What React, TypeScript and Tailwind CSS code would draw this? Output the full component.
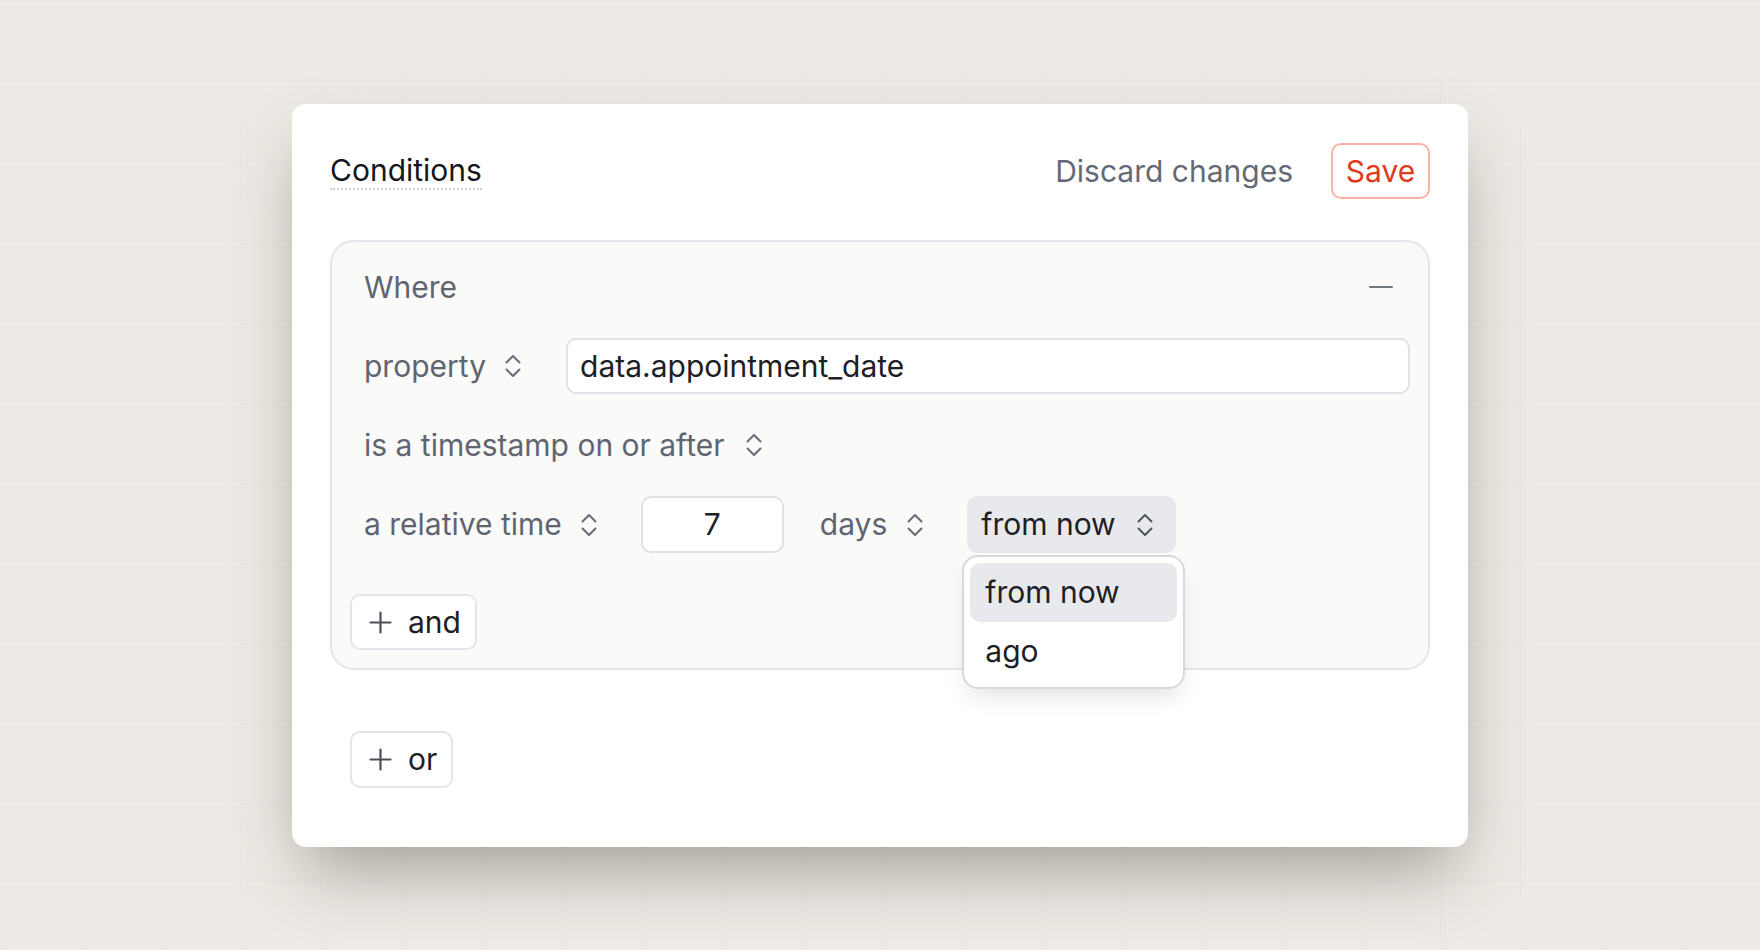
import { ReactNode } from 'react';

function Chevrons({ className = '' }: { className?: string }) {
  return (
    <svg
      width="18"
      height="26"
      viewBox="0 0 18 26"
      fill="none"
      stroke="currentColor"
      strokeWidth="2"
      strokeLinecap="round"
      strokeLinejoin="round"
      className={className}
    >
      <path d="M2.5 9.5 9 3l6.5 6.5" />
      <path d="M2.5 16.5 9 23l6.5-6.5" />
    </svg>
  );
}

function Plus() {
  return (
    <svg width="23" height="23" viewBox="0 0 23 23" fill="none" stroke="currentColor" strokeWidth="2.2" strokeLinecap="round">
      <path d="M11.5 1.5v20M1.5 11.5h20" />
    </svg>
  );
}

function SelectLabel({ children, gap = 'gap-[18px]' }: { children: ReactNode; gap?: string }) {
  return (
    <button className={`flex h-[56px] items-center ${gap} px-[14px] text-[#5f6570]`}>
      <span>{children}</span>
      <Chevrons className="text-[#676d78]" />
    </button>
  );
}

function AddButton({ label, className = '' }: { label: string; className?: string }) {
  return (
    <button
      className={`flex h-[56px] items-center gap-[16px] self-start rounded-[10px] border-2 border-[#e3e5e9] bg-white pl-[17px] pr-[14px] text-[#1d2025] ${className}`}
    >
      <span className="text-[#4b5058]">
        <Plus />
      </span>
      <span>{label}</span>
    </button>
  );
}

export default function App() {
  return (
    <div className="min-h-screen w-full bg-[#eeebe6] bg-[linear-gradient(to_right,rgba(0,0,0,0.02)_1px,transparent_1px),linear-gradient(to_bottom,rgba(0,0,0,0.02)_1px,transparent_1px)] bg-[size:80px_80px] pl-[292px] pt-[104px] font-['Inter','Noto_Sans',sans-serif] text-[30px]">
      <div className="flex h-[743px] w-[1176px] flex-col rounded-[14px] bg-white px-[38px] pt-[39px] shadow-[0_34px_70px_-12px_rgba(60,50,40,0.42)]">
        {/* header */}
        <div className="flex h-[56px] items-center justify-between">
          <span className="border-b-2 border-dotted border-[#cdd0d5] leading-[36px] text-[#15171a]">Conditions</span>
          <div className="flex items-center gap-[38px]">
            <button className="text-[#646a74]">Discard changes</button>
            <button className="flex h-[56px] w-[99px] items-center justify-center rounded-[10px] border-2 border-[#f8b3a4] text-[#e2391c]">
              Save
            </button>
          </div>
        </div>

        {/* where group */}
        <div className="mt-[41px] flex flex-col gap-[23px] rounded-[24px] border-2 border-[#e4e6ea] bg-[#fafaf9] px-[18px] pb-[18px] pt-[17px]">
          <div className="flex h-[56px] items-center justify-between pl-[14px] pr-[17px]">
            <span className="text-[#5f6570]">Where</span>
            <span className="block h-[2px] w-[24px] rounded-full bg-[#70757f]" />
          </div>

          <div className="flex h-[56px] items-center">
            <SelectLabel>property</SelectLabel>
            <div className="ml-[30px] flex h-[56px] flex-1 items-center rounded-[10px] border-2 border-[#dfe1e5] bg-white px-[12px] text-[#1d2025]">
              data.appointment_date
            </div>
          </div>

          <div className="flex h-[56px] items-center">
            <SelectLabel gap="gap-[20px]">is a timestamp on or after</SelectLabel>
          </div>

          <div className="flex h-[57px] items-center">
            <SelectLabel>a relative time</SelectLabel>
            <div className="ml-[29px] flex h-[57px] w-[143px] items-center justify-center rounded-[10px] border-2 border-[#dfe1e5] bg-white text-[#1d2025]">
              7
            </div>
            <div className="ml-[22px]">
              <SelectLabel gap="gap-[19px]">days</SelectLabel>
            </div>
            <div className="relative ml-[29px]">
              <button className="flex h-[57px] items-center gap-[20px] rounded-[10px] bg-[#e8e9ec] pl-[14px] pr-[22px] text-[#1d2025]">
                <span>from now</span>
                <Chevrons className="text-[#50555e]" />
              </button>
              <div className="absolute left-[-5px] top-[calc(100%+2px)] z-10 w-[223px] rounded-[16px] border-2 border-[#d6d8dc] bg-white p-[6px] shadow-[0_12px_24px_-6px_rgba(0,0,0,0.12)]">
                <div className="flex h-[59px] items-center rounded-[10px] bg-[#e8e9ec] px-[15px] text-[#1d2025]">from now</div>
                <div className="flex h-[59px] items-center rounded-[10px] px-[15px] text-[#1d2025]">ago</div>
              </div>
            </div>
          </div>

          <AddButton label="and" className="mt-[18px]" />
        </div>

        <AddButton label="or" className="ml-[20px] mt-[61px] h-[57px]" />
      </div>
    </div>
  );
}
